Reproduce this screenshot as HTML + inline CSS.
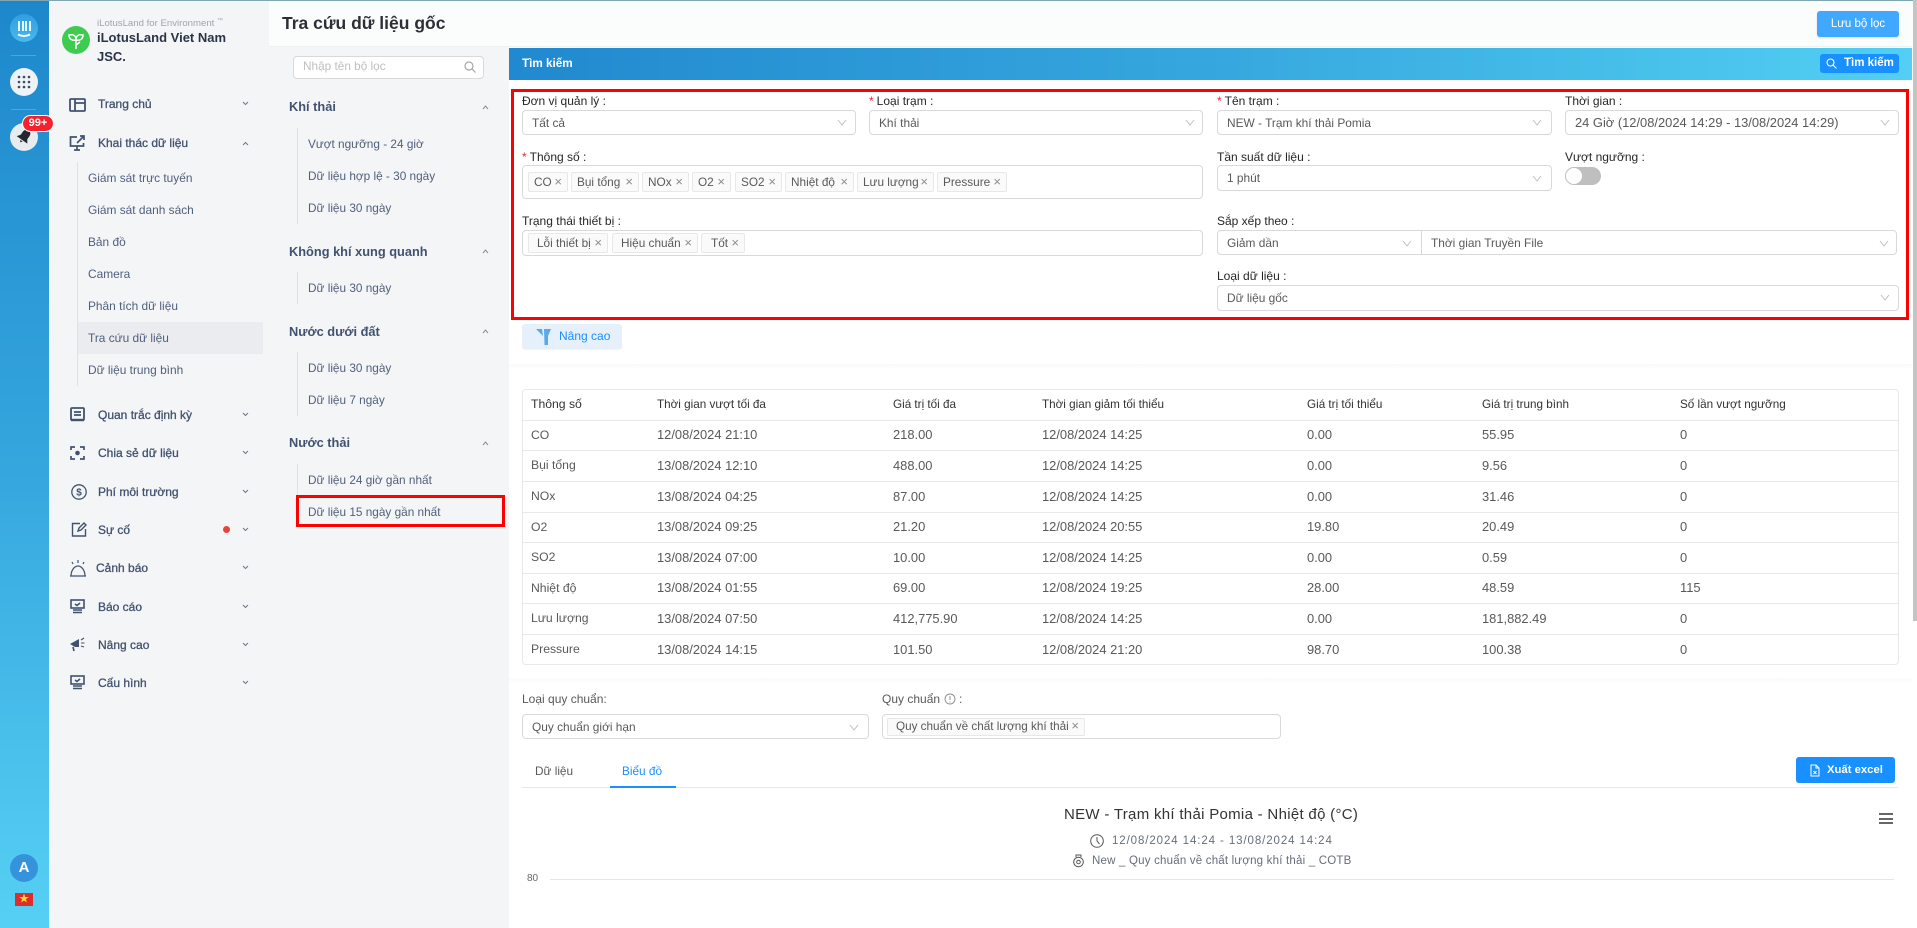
<!DOCTYPE html>
<html lang="vi"><head><meta charset="utf-8"><title>Tra cứu dữ liệu gốc</title>
<style>
*{box-sizing:border-box}
html,body{margin:0;padding:0;width:1917px;height:928px;overflow:hidden;background:#fff;font-family:"Liberation Sans","Noto Sans CJK SC",sans-serif}
.a{position:absolute}
.t{position:absolute;white-space:nowrap;line-height:20px;height:20px}
.m{font-size:12px;-webkit-text-stroke:.3px #42526e;color:#42526e;left:98px}
.s{font-size:11.9px;color:#505f79;left:88px}
.g{font-size:12.8px;font-weight:700;color:#42526e;left:289px}
.i{font-size:11.8px;color:#505f79;left:308px}
.l{font-size:12px;color:#262626}
.l b{color:#f5222d;font-weight:400;margin-right:3px}
.v{font-size:11.9px;color:#595959}
.box{position:absolute;border:1px solid #d9d9d9;border-radius:4px;background:#fff}
.tag{position:absolute;height:20px;line-height:18px;border:1px solid #e8e8e8;background:#fafafa;border-radius:2px;font-size:11.8px;color:#595959;padding-left:5px;white-space:nowrap}
.tag i{position:absolute;right:5px;top:0;font-style:normal;color:#8c8c8c;font-size:13px}
.vl{position:absolute;width:1px;background:#dfe1e6}
svg{position:absolute;overflow:visible}
table{border-collapse:separate;border-spacing:0;table-layout:fixed;width:100%}
td{padding:0 0 2px 8px;border-bottom:1px solid #e8e8e8;font-size:12.9px;color:#595959;white-space:nowrap}
td:first-child{font-size:12.2px}
tr:first-child td{color:#333;font-size:11.7px}
tr:first-child td:first-child{font-size:12.2px}
tr:last-child td{border-bottom:0}
</style></head><body>

<!-- backgrounds -->
<div class="a" style="left:49px;top:0;width:220px;height:928px;background:#f4f5f7"></div>
<div class="a" style="left:269px;top:46px;width:240px;height:882px;background:#f4f5f7"></div>
<div class="a" style="left:269px;top:0;width:1648px;height:47px;background:#fbfcfc;border-bottom:1px solid #eef0f1"></div>
<div class="a" style="left:509px;top:47px;width:1404px;height:881px;background:#fff"></div>

<!-- rail -->
<div class="a" style="left:0;top:0;width:49px;height:928px;background:linear-gradient(180deg,#1d87cb 0%,#35a6de 50%,#56d0f4 100%)"></div>
<div class="a" style="left:0;top:0;width:1917px;height:1px;background:#7fa7b3"></div>
<div class="a" style="left:1913px;top:0;width:4px;height:621px;background:#c4c4c4"></div>

<div class="a" style="left:10px;top:14px;width:28px;height:28px;border-radius:50%;background:linear-gradient(180deg,#2f9fe0,#47b9ec)"></div>
<svg style="left:10px;top:14px" width="28" height="28" fill="none" stroke="#fff"><path d="M9 7v10M13 7v10M16 7v10M20 7v10" stroke-width="1.8"/><path d="M8 20.500q6 3 12 0" stroke-width="2"/></svg>
<div class="a" style="left:11px;top:55px;width:25px;height:1px;background:#4aa6dc"></div>
<div class="a" style="left:10px;top:68px;width:28px;height:28px;border-radius:50%;background:#eef3f8"></div>
<svg style="left:10px;top:68px" width="28" height="28" fill="#3b4a5e"><circle cx="9" cy="9" r="1.3"/><circle cx="14" cy="9" r="1.3"/><circle cx="19" cy="9" r="1.3"/><circle cx="9" cy="14" r="1.3"/><circle cx="14" cy="14" r="1.3"/><circle cx="19" cy="14" r="1.3"/><circle cx="9" cy="19" r="1.3"/><circle cx="14" cy="19" r="1.3"/><circle cx="19" cy="19" r="1.3"/></svg>
<div class="a" style="left:11px;top:109px;width:25px;height:1px;background:#4aa6dc"></div>
<div class="a" style="left:10px;top:123px;width:28px;height:28px;border-radius:50%;background:#e8ecef"></div>
<svg style="left:10px;top:123px" width="28" height="28" fill="#22282f"><path transform="rotate(35 14 14)" d="M14 6c3 0 4 2 4 5v3l2.500 3.500h-13l2.500-3.500v-3c0-3 1-5 4-5zM12.500 18.500h3l-1.500 2z"/></svg>
<div class="a" style="left:22px;top:115px;width:32px;height:17px;border-radius:9px;background:#f5222d;border:1px solid #fff;color:#fff;font-size:11px;font-weight:700;line-height:15px;text-align:center">99+</div>
<div class="a" style="left:10px;top:854px;width:28px;height:28px;border-radius:50%;background:#3593dc;color:#fff;font-size:15px;font-weight:700;line-height:28px;text-align:center">A</div>
<div class="a" style="left:15px;top:893px;width:18px;height:13px;background:#e02b2b;color:#ffdd33;font-size:10px;line-height:13px;text-align:center">★</div>

<!-- brand -->
<div class="t" style="left:97px;top:11px;font-size:9.600px;color:#a0a4ab">iLotusLand for Environment <sup style="font-size:6px">™</sup></div>
<div class="a" style="left:62px;top:26px;width:28px;height:28px;border-radius:50%;background:#3ecb50"></div>
<svg style="left:62px;top:26px" width="28" height="28" fill="none" stroke="#fff" stroke-width="1.500"><path d="M14 23V12M14 14c-4 1-7-1-7-5 5-1 7 1 7 5zM14 14c4 1 7-1 7-5-5-1-7 1-7 5zM14 19l4-3"/></svg>
<div class="t" style="left:97px;top:28px;font-size:13px;font-weight:700;color:#2b3445">iLotusLand Viet Nam</div>
<div class="t" style="left:97px;top:47px;font-size:13px;font-weight:700;color:#2b3445">JSC.</div>

<!-- menu icons -->
<svg style="left:69px;top:98px" width="18" height="14" fill="none" stroke="#42526e" stroke-width="1.800"><rect x="1" y="1" width="15" height="12" rx="1"/><path d="M6 1v12M6 5h10"/></svg>
<svg style="left:69px;top:135px" width="18" height="16" fill="none" stroke="#42526e" stroke-width="1.700"><path d="M8 2H1.500v9h13V8M5 15h6M8 11v4"/><path d="M8 8l7-7M11 1h4v4"/></svg>
<svg style="left:70px;top:407px" width="16" height="15" fill="none" stroke="#42526e" stroke-width="1.800"><rect x="1" y="1" width="13" height="12" rx="1"/><path d="M4 5h7M4 8h7"/><path d="M1 13h13" stroke-width="2.400"/></svg>
<svg style="left:70px;top:446px" width="16" height="15" fill="none" stroke="#42526e" stroke-width="1.700"><path d="M1 4V1h4M10 1h4v3M14 10v3h-4M5 13H1v-3"/><circle cx="7.500" cy="7" r="2.300" fill="#42526e" stroke="none"/></svg>
<svg style="left:71px;top:484px" width="16" height="16" fill="none" stroke="#42526e" stroke-width="1.300"><circle cx="8" cy="8" r="7.200"/><text x="8" y="11.500" text-anchor="middle" font-size="10" font-weight="700" fill="#42526e" stroke="none" font-family="Liberation Sans">$</text></svg>
<svg style="left:71px;top:522px" width="16" height="15" fill="none" stroke="#42526e" stroke-width="1.400"><path d="M9 1.500H1.500v12.500h13V7"/><path d="M7 9l1-3 5-5 2 2-5 5z"/></svg>
<svg style="left:69px;top:559px" width="18" height="18" fill="none" stroke="#42526e" stroke-width="1.200"><path d="M1 17h16M2 17c0-5 3-10 7-10s7 5 7 10M9 1v3M3 3l1 2M15 3l-1 2"/></svg>
<svg style="left:70px;top:599px" width="16" height="15" fill="none" stroke="#42526e" stroke-width="1.600"><rect x="1" y="1" width="13" height="8"/><path d="M3 11h9M3 13.500h9"/><path d="M5 5l2 1.500L10 4"/></svg>
<svg style="left:69px;top:636px" width="17" height="16" fill="#42526e"><path d="M1 8l9-5v8H7l-1 0z"/><path d="M4 11l1 4" stroke="#42526e" stroke-width="1.600"/><path d="M12 4l3-2M12 7h3.500M12 10l3 1" stroke="#42526e" stroke-width="1.100"/></svg>
<svg style="left:70px;top:675px" width="16" height="15" fill="none" stroke="#42526e" stroke-width="1.600"><rect x="1" y="1" width="13" height="8"/><path d="M3 11h9M3 13.500h9"/><path d="M5 5l2 1.500L10 4"/></svg>

<!-- menu -->
<div class="t m" style="top:94px">Trang chủ</div>
<div class="t m" style="top:133px">Khai thác dữ liệu</div>
<div class="t m" style="top:405px">Quan trắc định kỳ</div>
<div class="t m" style="top:443px">Chia sẻ dữ liệu</div>
<div class="t m" style="top:482px">Phí môi trường</div>
<div class="t m" style="top:520px">Sự cố</div>
<div class="t m" style="top:558px;left:96px">Cảnh báo</div>
<div class="t m" style="top:597px">Báo cáo</div>
<div class="t m" style="top:635px">Nâng cao</div>
<div class="t m" style="top:673px">Cấu hình</div>
<div class="a" style="left:223px;top:526px;width:7px;height:7px;border-radius:50%;background:#ea4335"></div>
<svg style="left:0;top:0" width="300" height="700" fill="none" stroke="#6b778c" stroke-width="1"><path d="M243 102l2.500 2.500 2.500-2.500M243 145l2.500-2.500 2.500 2.500M243 413l2.500 2.500 2.500-2.500M243 451l2.500 2.500 2.500-2.500M243 490l2.500 2.500 2.500-2.500M243 528l2.500 2.500 2.500-2.500M243 566l2.500 2.500 2.500-2.500M243 605l2.500 2.500 2.500-2.500M243 643l2.500 2.500 2.500-2.500M243 681l2.500 2.500 2.500-2.500"/></svg>
<div class="vl" style="left:77px;top:162px;height:224px"></div>
<div class="a" style="left:78px;top:322px;width:185px;height:32px;background:#ebecf0"></div>
<div class="t s" style="top:168px">Giám sát trực tuyến</div>
<div class="t s" style="top:200px">Giám sát danh sách</div>
<div class="t s" style="top:232px">Bản đồ</div>
<div class="t s" style="top:264px">Camera</div>
<div class="t s" style="top:296px">Phân tích dữ liệu</div>
<div class="t s" style="top:328px">Tra cứu dữ liệu</div>
<div class="t s" style="top:360px">Dữ liệu trung bình</div>

<!-- title -->
<div class="t" style="left:282px;top:13px;font-size:17.500px;font-weight:700;color:#2b3036">Tra cứu dữ liệu gốc</div>
<div class="a" style="left:1817px;top:11px;width:82px;height:26px;border-radius:3px;background:#40a9ff;color:#fff;font-size:11.500px;line-height:26px;text-align:center;box-shadow:0 1px 2px rgba(0,0,0,.12)">Lưu bộ lọc</div>

<!-- filter panel -->
<div class="box" style="left:293px;top:56px;width:191px;height:23px;background:#fff"></div>
<div class="t" style="left:303px;top:56px;font-size:11.800px;color:#bfbfbf">Nhập tên bộ lọc</div>
<svg style="left:464px;top:61px" width="12" height="12" fill="none" stroke="#a6a6a6" stroke-width="1.200"><circle cx="5" cy="5" r="4"/><path d="M8 8l3.500 3.500"/></svg>
<div class="t g" style="top:97px">Khí thải</div>
<div class="t g" style="top:242px">Không khí xung quanh</div>
<div class="t g" style="top:322px">Nước dưới đất</div>
<div class="t g" style="top:433px">Nước thải</div>
<svg style="left:0;top:0" width="500" height="460" fill="none" stroke="#8c8c8c" stroke-width="1"><path d="M483 109l2.500-3 2.500 3M483 253l2.500-3 2.500 3M483 333l2.500-3 2.500 3M483 445l2.500-3 2.500 3"/></svg>
<div class="vl" style="left:297px;top:128px;height:96px"></div>
<div class="vl" style="left:297px;top:272px;height:32px"></div>
<div class="vl" style="left:297px;top:352px;height:64px"></div>
<div class="vl" style="left:297px;top:464px;height:32px"></div>
<div class="t i" style="top:134px">Vượt ngưỡng - 24 giờ</div>
<div class="t i" style="top:166px">Dữ liệu hợp lệ - 30 ngày</div>
<div class="t i" style="top:198px">Dữ liệu 30 ngày</div>
<div class="t i" style="top:278px">Dữ liệu 30 ngày</div>
<div class="t i" style="top:358px">Dữ liệu 30 ngày</div>
<div class="t i" style="top:390px">Dữ liệu 7 ngày</div>
<div class="t i" style="top:470px">Dữ liệu 24 giờ gần nhất</div>
<div class="t i" style="top:502px">Dữ liệu 15 ngày gần nhất</div>
<div class="a" style="left:296px;top:495px;width:209px;height:32px;border:3px solid #f00"></div>

<!-- search head -->
<div class="a" style="left:509px;top:48px;width:1403px;height:32px;background:linear-gradient(90deg,#2189cf 0%,#36a7de 50%,#52cff2 100%)"></div>
<div class="t" style="left:522px;top:53px;font-size:11.700px;font-weight:700;color:#fff;margin-top:1px">Tìm kiếm</div>
<div class="a" style="left:1820px;top:54px;width:79px;height:19px;border-radius:3px;background:#1890ff;color:#fff;font-size:11.500px;font-weight:700;line-height:19px;padding-left:24px">Tìm kiếm</div>
<svg style="left:1826px;top:58px" width="11" height="11" fill="none" stroke="#fff" stroke-width="1.100"><circle cx="4.500" cy="4.500" r="3.500"/><path d="M7 7l3.500 3.500"/></svg>

<!-- form -->
<div class="a" style="left:511px;top:89px;width:1398px;height:231px;border:3px solid #f00"></div>
<div class="t l" style="left:522px;top:91px">Đơn vị quản lý :</div>
<div class="t l" style="left:869px;top:91px"><b>*</b>Loại trạm :</div>
<div class="t l" style="left:1217px;top:91px"><b>*</b>Tên trạm :</div>
<div class="t l" style="left:1565px;top:91px">Thời gian :</div>
<div class="box" style="left:522px;top:110px;width:334px;height:25px"></div>
<div class="box" style="left:869px;top:110px;width:334px;height:25px"></div>
<div class="box" style="left:1217px;top:110px;width:335px;height:25px"></div>
<div class="box" style="left:1565px;top:110px;width:334px;height:25px"></div>
<div class="t v" style="left:532px;top:113px">Tất cả</div>
<div class="t v" style="left:879px;top:113px">Khí thải</div>
<div class="t v" style="left:1227px;top:113px">NEW - Trạm khí thải Pomia</div>
<div class="t v" style="left:1575px;top:113px;font-size:12.900px">24 Giờ (12/08/2024 14:29 - 13/08/2024 14:29)</div>

<div class="t l" style="left:522px;top:147px"><b>*</b>Thông số :</div>
<div class="t l" style="left:1217px;top:147px">Tần suất dữ liệu :</div>
<div class="t l" style="left:1565px;top:147px">Vượt ngưỡng :</div>
<div class="box" style="left:522px;top:165px;width:681px;height:34px"></div>
<div class="tag" style="left:528px;top:172px;width:40px">CO<i>×</i></div>
<div class="tag" style="left:571px;top:172px;width:68px">Bụi tổng<i>×</i></div>
<div class="tag" style="left:642px;top:172px;width:47px">NOx<i>×</i></div>
<div class="tag" style="left:692px;top:172px;width:39px">O2<i>×</i></div>
<div class="tag" style="left:735px;top:172px;width:47px">SO2<i>×</i></div>
<div class="tag" style="left:785px;top:172px;width:69px">Nhiệt độ<i>×</i></div>
<div class="tag" style="left:857px;top:172px;width:77px">Lưu lượng<i>×</i></div>
<div class="tag" style="left:937px;top:172px;width:70px">Pressure<i>×</i></div>
<div class="box" style="left:1217px;top:165px;width:335px;height:26px"></div>
<div class="t v" style="left:1227px;top:168px">1 phút</div>
<div class="a" style="left:1565px;top:167px;width:36px;height:18px;border-radius:9px;background:#bfbfbf"></div>
<div class="a" style="left:1566px;top:168px;width:16px;height:16px;border-radius:50%;background:#fff"></div>

<div class="t l" style="left:522px;top:211px">Trạng thái thiết bị :</div>
<div class="t l" style="left:1217px;top:211px">Sắp xếp theo :</div>
<div class="box" style="left:522px;top:230px;width:681px;height:26px"></div>
<div class="tag" style="left:528px;top:233px;width:80px;padding-left:8px">Lỗi thiết bị<i>×</i></div>
<div class="tag" style="left:612px;top:233px;width:86px;padding-left:8px">Hiệu chuẩn<i>×</i></div>
<div class="tag" style="left:701px;top:233px;width:44px;padding-left:9px">Tốt<i>×</i></div>
<div class="box" style="left:1217px;top:230px;width:205px;height:25px;border-radius:4px 0 0 4px"></div>
<div class="box" style="left:1421px;top:230px;width:476px;height:25px;border-radius:0 4px 4px 0"></div>
<div class="t v" style="left:1227px;top:233px">Giảm dần</div>
<div class="t v" style="left:1431px;top:233px">Thời gian Truyền File</div>

<div class="t l" style="left:1217px;top:266px">Loại dữ liệu :</div>
<div class="box" style="left:1217px;top:285px;width:682px;height:26px"></div>
<div class="t v" style="left:1227px;top:288px">Dữ liệu gốc</div>

<div class="a" style="left:522px;top:324px;width:100px;height:25px;border-radius:3px;background:#e6f0fb;box-shadow:0 1px 1px rgba(0,0,0,.05)"></div>
<svg style="left:536px;top:329px" width="16" height="16" fill="#5ba9e8"><path d="M0 0h6l1 7zM8 0h7l-3 7v9H8.500z"/></svg>
<div class="t" style="left:559px;top:326px;font-size:12px;color:#1890ff">Nâng cao</div>

<div class="a" style="left:509px;top:364px;width:1403px;height:6px;background:linear-gradient(#fafafa,#fff)"></div>

<!-- summary table -->
<div class="a" style="left:522px;top:389px;width:1377px;height:276px;border:1px solid #e8e8e8;border-radius:4px;overflow:hidden">
<table><colgroup><col style="width:126px"><col style="width:236px"><col style="width:149px"><col style="width:265px"><col style="width:175px"><col style="width:198px"><col></colgroup>
<tr style="height:31px"><td>Thông số</td><td>Thời gian vượt tối đa</td><td>Giá trị tối đa</td><td>Thời gian giảm tối thiểu</td><td>Giá trị tối thiểu</td><td>Giá trị trung bình</td><td>Số lần vượt ngưỡng</td></tr>
<tr style="height:30px"><td>CO</td><td>12/08/2024 21:10</td><td>218.00</td><td>12/08/2024 14:25</td><td>0.00</td><td>55.95</td><td>0</td></tr>
<tr style="height:31px"><td>Bụi tổng</td><td>13/08/2024 12:10</td><td>488.00</td><td>12/08/2024 14:25</td><td>0.00</td><td>9.56</td><td>0</td></tr>
<tr style="height:31px"><td>NOx</td><td>13/08/2024 04:25</td><td>87.00</td><td>12/08/2024 14:25</td><td>0.00</td><td>31.46</td><td>0</td></tr>
<tr style="height:30px"><td>O2</td><td>13/08/2024 09:25</td><td>21.20</td><td>12/08/2024 20:55</td><td>19.80</td><td>20.49</td><td>0</td></tr>
<tr style="height:31px"><td>SO2</td><td>13/08/2024 07:00</td><td>10.00</td><td>12/08/2024 14:25</td><td>0.00</td><td>0.59</td><td>0</td></tr>
<tr style="height:30px"><td>Nhiệt độ</td><td>13/08/2024 01:55</td><td>69.00</td><td>12/08/2024 19:25</td><td>28.00</td><td>48.59</td><td>115</td></tr>
<tr style="height:31px"><td>Lưu lượng</td><td>13/08/2024 07:50</td><td>412,775.90</td><td>12/08/2024 14:25</td><td>0.00</td><td>181,882.49</td><td>0</td></tr>
<tr style="height:30px"><td>Pressure</td><td>13/08/2024 14:15</td><td>101.50</td><td>12/08/2024 21:20</td><td>98.70</td><td>100.38</td><td>0</td></tr>
</table></div>

<div class="a" style="left:509px;top:678px;width:1403px;height:6px;background:linear-gradient(#fafafa,#fff)"></div>

<!-- bottom -->
<div class="t" style="left:522px;top:689px;font-size:12px;color:#595959">Loại quy chuẩn:</div>
<div class="t" style="left:882px;top:689px;font-size:12px;color:#595959">Quy chuẩn</div>
<svg style="left:944px;top:693px" width="12" height="12" fill="none" stroke="#8c8c8c" stroke-width=".9"><circle cx="6" cy="6" r="5"/><path d="M6 3v4M6 8.500v1"/></svg>
<div class="t" style="left:959px;top:689px;font-size:12px;color:#595959">:</div>
<div class="box" style="left:522px;top:714px;width:347px;height:25px"></div>
<div class="t v" style="left:532px;top:717px">Quy chuẩn giới hạn</div>
<div class="box" style="left:882px;top:714px;width:399px;height:25px"></div>
<div class="tag" style="left:887px;top:718px;width:198px;height:18px;line-height:16px;padding-left:8px;font-size:11.700px">Quy chuẩn về chất lượng khí thải<i style="top:-1px">×</i></div>

<div class="t" style="left:535px;top:761px;font-size:11.800px;color:#595959">Dữ liệu</div>
<div class="t" style="left:622px;top:761px;font-size:11.800px;color:#1890ff">Biểu đồ</div>
<div class="a" style="left:522px;top:787px;width:1376px;height:1px;background:#e8e8e8"></div>
<div class="a" style="left:610px;top:786px;width:66px;height:2px;background:#1890ff"></div>
<div class="a" style="left:1796px;top:757px;width:99px;height:26px;border-radius:3px;background:#1890ff;color:#fff;font-size:11.300px;font-weight:700;line-height:26px;padding-left:31px">Xuất excel</div>
<svg style="left:1810px;top:764px" width="10" height="13" fill="none" stroke="#fff" stroke-width="1"><path d="M1 1h5l3 3v8H1zM6 1v3h3M3.500 7l3 3M6.500 7l-3 3"/></svg>

<div class="t" style="left:1064px;top:805px;font-size:15px;color:#333;letter-spacing:.3px">NEW - Trạm khí thải Pomia - Nhiệt độ (°C)</div>
<svg style="left:1090px;top:834px" width="14" height="14" fill="none" stroke="#555" stroke-width="1"><circle cx="7" cy="7" r="6.300"/><path d="M7 3v4l2.500 3"/></svg>
<div class="t" style="left:1112px;top:831px;font-size:11.500px;color:#666e7a;letter-spacing:.9px">12/08/2024 14:24 - 13/08/2024 14:24</div>
<svg style="left:1073px;top:854px" width="11" height="14" fill="none" stroke="#555" stroke-width="1"><circle cx="5.500" cy="8" r="4.800"/><circle cx="5.500" cy="8" r="1.800"/><path d="M3 3V1h5v2"/></svg>
<div class="t" style="left:1092px;top:851px;font-size:11.500px;color:#666e7a;letter-spacing:.2px">New _ Quy chuẩn về chất lượng khí thải _ COTB</div>
<div class="t" style="left:527px;top:869px;font-size:10px;color:#666">80</div>
<div class="a" style="left:550px;top:879px;width:1344px;height:1px;background:#e6e6e6"></div>
<div class="a" style="left:1879px;top:813px;width:14px;height:2px;background:#666"></div>
<div class="a" style="left:1879px;top:817.500px;width:14px;height:2px;background:#666"></div>
<div class="a" style="left:1879px;top:822px;width:14px;height:2px;background:#666"></div>

<svg style="left:0;top:0" width="1917" height="780" fill="none" stroke="#bfbfbf" stroke-width="1"><path d="M838 120l4 5 4-5M1186 120l4 5 4-5M1533 120l4 5 4-5M1881 120l4 5 4-5M1533 176l4 5 4-5M1403 241l4 5 4-5M1880 241l4 5 4-5M1881 295l4 5 4-5M850 725l4 5 4-5"/></svg>
</body></html>
